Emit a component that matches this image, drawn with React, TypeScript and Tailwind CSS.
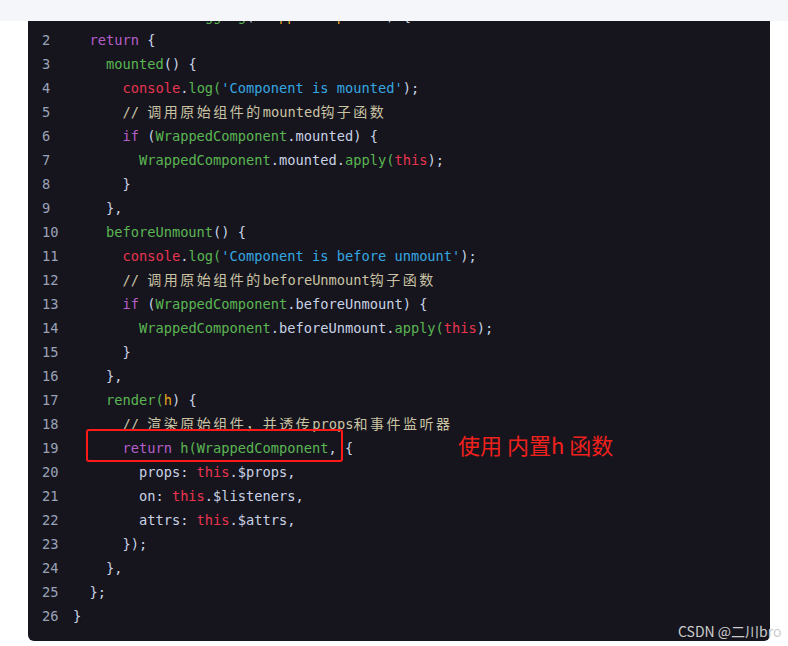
import React from "react";

type Tok = [string, string];

// token colours
const K = "text-[#b55fc8]"; // keywords
const F = "text-[#5bb552]"; // functions / identifiers
const R = "text-[#e8344f]"; // console / this
const S = "text-[#35a7e0]"; // strings
const C = "text-[#c9c3a3]"; // comments
const P = "text-[#c8d2e4]"; // punctuation / plain
const O = "text-[#e5a822]"; // params

const lines: Tok[][] = [
  [[" ", P], ["function", K], [" ", P], ["withLogging", F], ["(", P], ["WrappedComponent", O], [") {", P]],
  [["  ", P], ["return", K], [" {", P]],
  [["    ", P], ["mounted", F], ["() {", P]],
  [["      ", P], ["console", R], [".", P], ["log(", F], ["'Component is mounted'", S], [");", P]],
  [["      ", P], ["// 调用原始组件的mounted钩子函数", C]],
  [["      ", P], ["if", K], [" (", P], ["WrappedComponent", F], [".mounted) {", P]],
  [["        ", P], ["WrappedComponent", F], [".mounted.", P], ["apply(", F], ["this", R], [");", P]],
  [["      }", P]],
  [["    },", P]],
  [["    ", P], ["beforeUnmount", F], ["() {", P]],
  [["      ", P], ["console", R], [".", P], ["log(", F], ["'Component is before unmount'", S], [");", P]],
  [["      ", P], ["// 调用原始组件的beforeUnmount钩子函数", C]],
  [["      ", P], ["if", K], [" (", P], ["WrappedComponent", F], [".beforeUnmount) {", P]],
  [["        ", P], ["WrappedComponent", F], [".beforeUnmount.", P], ["apply(", F], ["this", R], [");", P]],
  [["      }", P]],
  [["    },", P]],
  [["    ", P], ["render(", F], ["h", O], [") {", P]],
  [["      ", P], ["// 渲染原始组件，并透传props和事件监听器", C]],
  [["      ", P], ["return", K], [" h(WrappedComponent", F], [", {", P]],
  [["        props: ", P], ["this", R], [".$props,", P]],
  [["        on: ", P], ["this", R], [".$listeners,", P]],
  [["        attrs: ", P], ["this", R], [".$attrs,", P]],
  [["      });", P]],
  [["    },", P]],
  [["  };", P]],
  [["}", P]],
];

// CJK glyphs take two columns in the code font
function Text({ text }: { text: string }) {
  const parts = text.split(/([\u3000-\u9fff\uff00-\uffef]+)/);
  return (
    <>
      {parts.map((p, i) =>
        /[\u3000-\u9fff\uff00-\uffef]/.test(p) ? (
          <span key={i} className="text-[14px] tracking-[2.5px] font-['Noto_Sans_CJK_SC',sans-serif]">
            {p}
          </span>
        ) : (
          <span key={i}>{p}</span>
        )
      )}
    </>
  );
}

export default function App() {
  return (
    <div className="relative w-[788px] h-[646px] bg-white overflow-hidden">
      {/* code block */}
      <div className="ml-[28px] w-[742px] bg-[#16151e] rounded-b-[6px] pt-[4px] pb-[13px] font-['DejaVu_Sans_Mono',monospace] text-[13.7px]">
        {lines.map((toks, i) => (
          <div key={i} className="flex h-[24px] items-center">
            <span className="w-[45px] pl-[14px] shrink-0 text-[#9ba3b8]">{i + 1}</span>
            <span className="whitespace-pre">
              {toks.map(([t, c], j) => (
                <span key={j} className={c}>
                  <Text text={t} />
                </span>
              ))}
            </span>
          </div>
        ))}
      </div>

      {/* page header strip covering the first line */}
      <div className="absolute top-0 left-0 right-0 h-[21px] bg-[#f5f6fa]" />

      {/* annotation */}
      <div className="absolute left-[86px] top-[429px] w-[257px] h-[33px] border-2 border-[#ff1a1a] rounded-[3px]" />
      <div className="absolute left-[458px] top-[430px] text-[22px] leading-[28px] text-[#f0201c] font-['Noto_Sans_CJK_SC',sans-serif]">
        使用 内置h 函数
      </div>

      {/* watermark */}
      <div className="absolute left-[678px] top-[621px] text-[14px] leading-[20px] text-[#cdcdcd] font-['Noto_Sans_CJK_SC',sans-serif]">
        CSDN @二川bro
      </div>
    </div>
  );
}
